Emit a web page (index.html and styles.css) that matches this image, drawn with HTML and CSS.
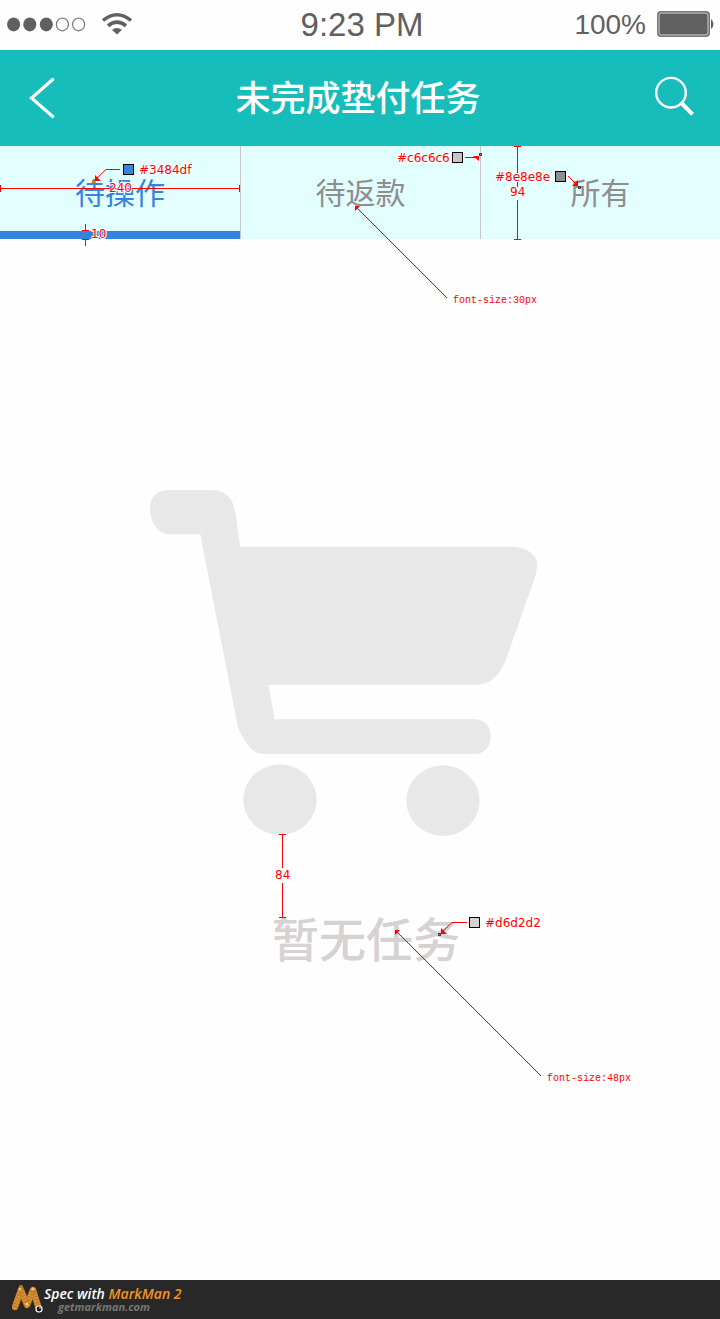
FILE: index.html
```html
<!DOCTYPE html>
<html lang="zh-CN">
<head>
<meta charset="utf-8">
<meta name="viewport" content="width=device-width, initial-scale=1">
<title>未完成垫付任务</title>
<link rel="stylesheet" href="styles.css">
</head>
<body>
<div class="page">
  <div class="status">
    <div class="status-left">
      <svg class="signal" width="80" height="16" viewBox="0 0 80 16" aria-hidden="true">
        <g fill="#606060"><ellipse cx="7.6" cy="7.4" rx="6.5" ry="7"/><ellipse cx="23.8" cy="7.4" rx="6.5" ry="7"/><ellipse cx="40.3" cy="7.4" rx="6.5" ry="7"/></g>
        <g fill="none" stroke="#777" stroke-width="1.2"><ellipse cx="56.4" cy="7.4" rx="6" ry="6.4"/><ellipse cx="72.6" cy="7.4" rx="6" ry="6.4"/></g>
      </svg>
      <svg class="wifi" width="30" height="24" viewBox="0 0 30 24" aria-hidden="true">
        <path d="M1 7.5Q15 -3.8 29 7.5" fill="none" stroke="#606060" stroke-width="3.4"/>
        <path d="M6 12.8Q15 5.6 24 12.8" fill="none" stroke="#606060" stroke-width="3.6"/>
        <path d="M10 16.8Q15 13.2 20 16.8L15 21.5Z" fill="#606060"/>
      </svg>
    </div>
    <time class="clock">9:23 PM</time>
    <div class="status-right">
      <span class="percent">100%</span>
      <svg width="58" height="28" viewBox="0 0 58 28" aria-hidden="true">
        <rect x="1.5" y="0.5" width="52" height="25" rx="3" fill="#606060" stroke="#777"/>
        <rect x="3" y="2" width="49" height="22" rx="2" fill="none" stroke="#d4d4d4"/>
        <path d="M55 8Q57.5 10 57.5 13Q57.5 16 55 18Z" fill="#606060"/>
      </svg>
    </div>
  </div>

  <header class="header">
    <button class="icon-button" type="button" aria-label="返回">
      <svg width="44" height="44" viewBox="0 0 44 44"><path d="M30.7 3.5 9.5 22 30.7 40.5" fill="none" stroke="#fff" stroke-width="3.2" stroke-linecap="round"/></svg>
    </button>
    <h1 class="title">未完成垫付任务</h1>
    <button class="icon-button" type="button" aria-label="搜索">
      <svg width="44" height="44" viewBox="0 0 44 44"><circle cx="17" cy="16.7" r="14.8" fill="none" stroke="#fff" stroke-width="2.4"/><path d="M27 26.5 38.5 38.3" stroke="#fff" stroke-width="4"/></svg>
    </button>
  </header>

  <nav class="tabs">
    <button class="tab tab-active" type="button">待操作</button>
    <button class="tab" type="button">待返款</button>
    <button class="tab" type="button">所有</button>
  </nav>

  <main class="empty">
    <svg class="cart" viewBox="30 29 1260 1038" aria-hidden="true">
      <path d="M86 29H218C240 29 254 38 267 50C279 62 288 94 290 125C295 168 299 184 301 199H1115C1159 199 1191 223 1191 251C1191 274 1187 286 1180 304L1102 526C1085 573 1062 613 1005 613H385C391 649 399 682 403 717H1004C1036 717 1052 738 1052 767C1052 799 1035 821 1004 821H372C342 821 325 801 303 761C292 742 291 724 287 705L190 210 181 162H88C54 162 30 125 30 84C30 48 54 30 86 29Z"/>
      <ellipse cx="420" cy="958" rx="110" ry="106"/>
      <ellipse cx="909" cy="961" rx="110" ry="106"/>
    </svg>
    <p class="empty-text">暂无任务</p>
  </main>

  <footer class="footer">
    <svg width="32" height="30" viewBox="0 0 32 30" aria-hidden="true">
      <g fill="none" stroke-linecap="round">
        <path d="M3 22 9 5 15 20 21 5 27 24" stroke="#71400f" stroke-width="7" stroke-linejoin="round"/>
        <path d="M3 22 9 5 15 20 21 5 27 24" stroke="#d79238" stroke-width="6" stroke-linejoin="round"/>
        <path d="M3 22 9 5 15 20 21 5 27 24" stroke="#b67627" stroke-width="6" stroke-linecap="butt" stroke-dasharray="1 2"/>
      </g>
      <circle cx="8" cy="4" r="1.5" fill="#f0c575"/><circle cx="21" cy="4" r="1.5" fill="#f0c575"/><circle cx="15" cy="19" r="1.5" fill="#ffd45a"/>
      <circle cx="27" cy="24" r="3.6" fill="#fff"/><circle cx="27" cy="24" r="2.4" fill="#111"/><circle cx="28" cy="23" r="0.8" fill="#fff"/>
    </svg>
    <div class="credit">
      <span class="credit-name">Spec with <b class="credit-brand">MarkMan 2</b></span>
      <a class="credit-link" href="#">getmarkman.com</a>
    </div>
  </footer>

  <svg class="notes" width="720" height="1280" viewBox="0 0 720 1280">
    <g class="rule">
      <path d="M0 188.5H240M.5 185V192M239.5 185V192"/>
      <path d="M120 169.5H106L97 178"/>
      <path d="M85.5 224V231M82 230.5H89M85.5 239V246M82 239.5H89"/>
      <path d="M465 157.5H476"/>
      <path d="M517.5 146V187M517.5 200V240M514 146.5H521M514 239.5H521"/>
      <path d="M568 176 576 184"/>
      <path d="M282.5 834V868M282.5 883V918M279 834.5H286M279 917.5H286"/>
      <path d="M467 922.5H452L443 931"/>
    </g>
    <g class="pointer"><path d="M357 208 447 298"/><path d="M397 932 541 1076"/></g>
    <g class="arrow">
      <path d="M95 175V181H101ZM473 156H479V161ZM578 180V186H572ZM355 206H360L355 211ZM441 928V934H447ZM395 930H400L395 935Z"/>
    </g>
    <path d="M92 180H95V183H92Z" fill="#c87820"/>
    <g class="marker"><path d="M479.5 153.5H481.5V155.5H479.5ZM578.5 186.5H580.5V188.5H578.5ZM438.5 933.5H440.5V935.5H438.5Z"/></g>
    <g stroke="#000">
      <rect x="123.5" y="164.5" width="10" height="10" fill="#3484df"/>
      <rect x="452.5" y="152.5" width="10" height="10" fill="#c6c6c6"/>
      <rect x="555.5" y="171.5" width="10" height="10" fill="#8e8e8e"/>
      <rect x="469.5" y="917.5" width="10" height="10" fill="#d6d2d2"/>
    </g>
    <g class="label">
      <text x="139" y="174">#3484df</text>
      <text x="109" y="192">240</text>
      <text x="91" y="238">10</text>
      <text x="397" y="162">#c6c6c6</text>
      <text x="495" y="181">#8e8e8e</text>
      <text x="510" y="196">94</text>
      <text x="275" y="879">84</text>
      <text x="485" y="927">#d6d2d2</text>
    </g>
    <g class="label label-mono">
      <text x="453" y="303">font-size:30px</text>
      <text x="547" y="1081">font-size:48px</text>
    </g>
  </svg>
</div>
</body>
</html>
```

FILE: styles.css
```css
* { box-sizing: border-box; }

body {
  margin: 0;
  background: #fefefe;
  font-family: "Liberation Sans", "Noto Sans CJK SC", sans-serif;
}

button {
  border: 0;
  padding: 0;
  background: none;
  font-family: inherit;
  cursor: pointer;
}

svg { display: block; }

.page {
  position: relative;
  display: flex;
  flex-direction: column;
  min-height: 100vh;
}

.status {
  display: grid;
  grid-template-columns: 1fr auto 1fr;
  align-items: center;
  height: 50px;
  padding: 0 6px;
  color: #606060;
}

.status-left,
.status-right {
  display: flex;
  align-items: center;
}

.status-left { gap: 16px; }
.status-right { justify-content: flex-end; gap: 10px; }
.clock { padding-left: 4px; font-size: 33px; }
.percent { font-size: 28px; }

.header {
  display: flex;
  align-items: center;
  justify-content: space-between;
  height: 96px;
  padding: 0 22px;
  background: #16bdbb;
  color: #fff;
}

.icon-button {
  width: 44px;
  height: 44px;
}

.title {
  margin: 0;
  padding: 2px 4px 0 0;
  font-size: 35px;
  font-weight: 500;
  line-height: 48px;
}

.tabs {
  display: grid;
  grid-template-columns: repeat(3, 1fr);
  height: 93px;
  background: #e3fefe;
}

.tab {
  padding-top: 2px;
  color: #8e8e8e;
  font-size: 30px;
  line-height: 40px;
}

.tab + .tab { border-left: 1px solid #c6c6c6; }

.tab-active {
  box-shadow: inset 0 -8px #3484df;
  color: #3484df;
}

.empty {
  display: flex;
  flex: 1;
  flex-direction: column;
  align-items: center;
  padding-top: 251px;
}

.cart {
  width: 420px;
  max-width: 100%;
  fill: #e8e8e8;
}

.empty-text {
  margin: 81px 0 0;
  padding-left: 12px;
  color: #d6d2d2;
  font-size: 47px;
  font-weight: 500;
  line-height: 48px;
}

.footer {
  display: flex;
  align-items: center;
  height: 39px;
  padding-left: 12px;
  background: #282828;
  font-family: "Open Sans", sans-serif;
  font-style: italic;
}

.credit {
  display: flex;
  flex-direction: column;
}

.credit-name {
  color: #fff;
  font-size: 14px;
  font-weight: 600;
  line-height: 14px;
}

.credit-brand {
  color: #f7941d;
  font-weight: inherit;
}

.credit-link {
  padding-left: 14px;
  color: #777;
  font-size: 11px;
  font-weight: 700;
  line-height: 12px;
  text-decoration: none;
}

.notes {
  position: absolute;
  top: 0;
  left: 0;
  pointer-events: none;
}

.rule { fill: none; stroke: #f00; }
.pointer { fill: none; stroke: #f00; }
.arrow { fill: #f00; }
.marker { fill: #999; stroke: #333; }

.label {
  fill: #f00;
  stroke: #fff;
  stroke-width: 2px;
  paint-order: stroke;
  font-family: "DejaVu Sans", sans-serif;
  font-size: 12px;
}

.label-mono {
  font-family: "Liberation Mono", monospace;
  font-size: 10px;
}
```
